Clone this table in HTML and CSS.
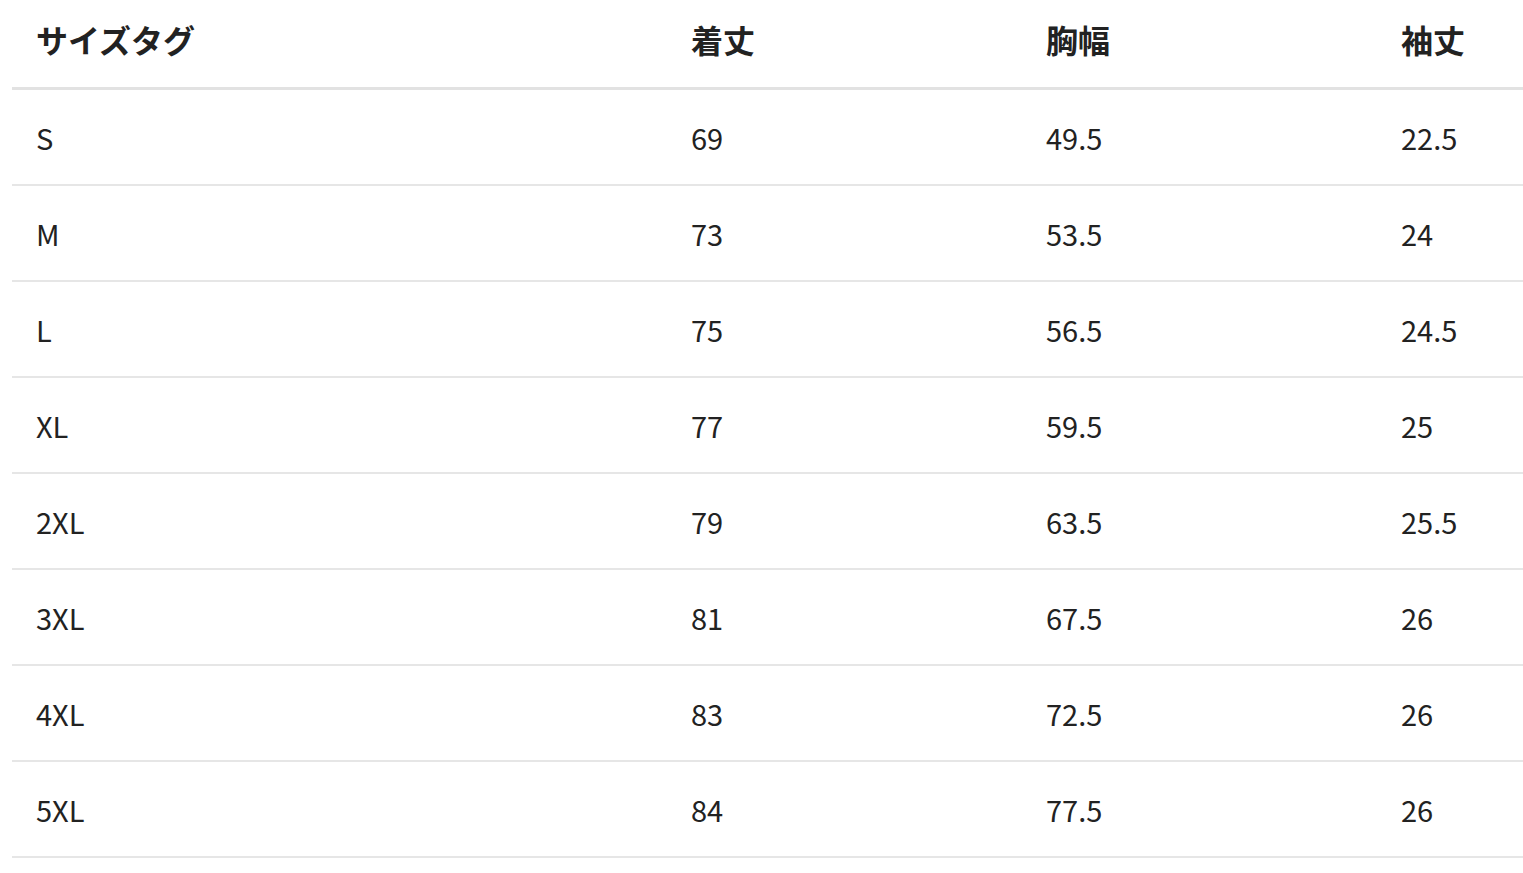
FILE: index.html
```html
<!DOCTYPE html>
<html lang="ja">
<head>
<meta charset="utf-8">
<title>サイズ表</title>
<link rel="stylesheet" href="styles.css">
</head>
<body>
<div class="wrap">
<table class="size-table">
<colgroup>
<col class="c1"><col class="c2"><col class="c3"><col class="c4">
</colgroup>
<thead>
<tr><th>サイズタグ</th><th>着丈</th><th>胸幅</th><th>袖丈</th></tr>
</thead>
<tbody>
<tr><td>S</td><td>69</td><td>49.5</td><td>22.5</td></tr>
<tr><td>M</td><td>73</td><td>53.5</td><td>24</td></tr>
<tr><td>L</td><td>75</td><td>56.5</td><td>24.5</td></tr>
<tr><td>XL</td><td>77</td><td>59.5</td><td>25</td></tr>
<tr><td>2XL</td><td>79</td><td>63.5</td><td>25.5</td></tr>
<tr><td>3XL</td><td>81</td><td>67.5</td><td>26</td></tr>
<tr><td>4XL</td><td>83</td><td>72.5</td><td>26</td></tr>
<tr><td>5XL</td><td>84</td><td>77.5</td><td>26</td></tr>
</tbody>
</table>
</div>
</body>
</html>
```
FILE: styles.css
```css
html, body {
  margin: 0;
  padding: 0;
  background: #ffffff;
}
.wrap {
  padding-left: 12px;
}
.size-table {
  width: 1511px;
  border-collapse: collapse;
  table-layout: fixed;
  font-family: "Noto Sans CJK JP", "Noto Sans", sans-serif;
  color: #222222;
}
.c1 { width: 655px; }
.c2 { width: 355px; }
.c3 { width: 355px; }
.c4 { width: 146px; }
.size-table th,
.size-table td {
  text-align: left;
  padding: 0 24px;
  white-space: nowrap;
}
.size-table th {
  height: 77px;
  padding-bottom: 10px;
  font-size: 32px;
  font-weight: 700;
  border-bottom: 3px solid #e2e2e2;
}
.size-table td {
  height: 94px;
  font-size: 29px;
  font-weight: 400;
  border-bottom: 2px solid #e6e6e6;
}
```
